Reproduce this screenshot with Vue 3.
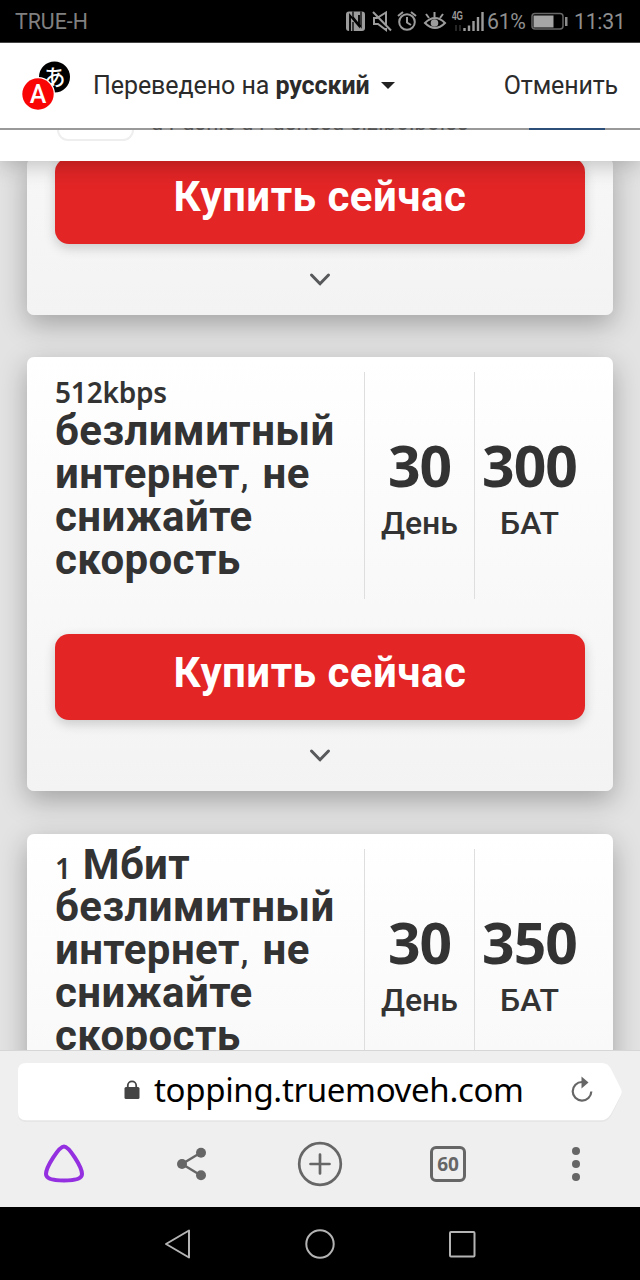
<script setup>
import { ref } from 'vue'

const plans = ref([
  { id: 1 },
  {
    id: 2,
    prefix: '512kbps',
    lines: [['безлимитный'], ['интернет', ' не'], ['снижайте'], ['скорость']],
    days: 30,
    price: 300
  },
  {
    id: 3,
    prefix: '1',
    unit: 'Мбит',
    lines: [['безлимитный'], ['интернет', ' не'], ['снижайте'], ['скорость']],
    days: 30,
    price: 350
  }
])
</script>

<template>
  <div class="phone">
    <header class="status-bar">
      <span class="carrier">TRUE-H</span>
      <svg class="status-icons" width="140" height="24" viewBox="345 9 140 24" fill="none" stroke="#9c9c9c" stroke-width="2">
        <!-- nfc -->
        <rect x="346" y="11.500" width="19" height="19.500" rx="3" fill="#9c9c9c" stroke="none" />
        <path d="M350 31V15.500L359 26V15" stroke="#000" stroke-width="1.800" />
        <path d="M353 11.500V17L361 27V11.500M353 31V22" stroke="#000" stroke-width="1.300" />
        <!-- sound off -->
        <path d="M373 18H377L386 12.500V26M374 18V24H378L386 30V28M373 12L391 30.500" />
        <!-- alarm -->
        <circle cx="407" cy="22" r="7.800" />
        <path d="M407 17V22.500L411 25M398 16L403 12M411 12L416 16" />
        <!-- eye -->
        <path d="M425 23Q435 13 445 23Q435 33 425 23Z" />
        <circle cx="434.500" cy="23" r="3.800" fill="#9c9c9c" stroke="none" />
        <path d="M434.500 12V17M426 14L429 18M443 14L440 18" />
        <!-- signal -->
        <path d="M464.500 28V31M469 25.500V31M473.500 21V31M478 17V31M482.500 12V31" stroke-width="2.400" />
        <path d="M456 25V31M460 25V31" stroke="#333" stroke-width="1.500" />
        <text x="452" y="20" class="net" textLength="11" lengthAdjust="spacingAndGlyphs">4G</text>
      </svg>
      <span class="percent">61%</span>
      <svg class="battery" width="37" height="20" viewBox="0 0 37 20">
        <rect x="1" y="2.500" width="31" height="15.500" rx="3" fill="none" stroke="#666" stroke-width="1.500" />
        <rect x="2.500" y="4.500" width="20" height="12" fill="#a6a6a6" />
        <rect x="34" y="6" width="2.500" height="9" fill="#8c8c8c" />
      </svg>
      <span class="clock">11:31</span>
    </header>

    <div class="translate-bar">
      <svg class="translate-logo" width="50" height="50" viewBox="0 0 50 50">
        <circle cx="32.500" cy="16" r="15.500" fill="#000" />
        <text x="32.500" y="23.500" class="kana">あ</text>
        <circle cx="16" cy="33" r="17" fill="#fff" />
        <circle cx="16" cy="33" r="15.700" fill="#f90505" />
        <text x="16" y="42" class="latin">A</text>
      </svg>
      <span class="translated">Переведено на <b>русский</b></span>
      <span class="caret"></span>
      <span class="cancel">Отменить</span>
    </div>

    <div class="app-banner">
      <div class="app-thumb"></div>
      <div class="app-name"><span>u r usnis u r usnssu siziboiboiss</span></div>
      <div class="app-open"></div>
    </div>

    <main class="page">
      <section v-for="plan in plans" :key="plan.id" class="card">
        <div v-if="plan.prefix" class="info">
          <h2 class="title">
            <span class="first" :class="{ short: !plan.unit }"><span class="prefix">{{ plan.prefix }}</span><span v-if="plan.unit" class="unit">{{ plan.unit }}</span></span>
            <span v-for="line in plan.lines" :key="line[0]" class="line">{{ line[0] }}<template v-if="line[1]"><span class="comma">,</span>{{ line[1] }}</template></span>
          </h2>
          <div class="cell">
            <strong>{{ plan.days }}</strong>
            <span>День</span>
          </div>
          <div class="cell">
            <strong>{{ plan.price }}</strong>
            <span>БАТ</span>
          </div>
        </div>
        <button class="buy">Купить сейчас</button>
        <div class="expand">
          <svg width="24" height="16" viewBox="0 0 24 16" fill="none" stroke="#58595b" stroke-width="3" stroke-linecap="round" stroke-linejoin="round">
            <path d="M3.500 3L12 11.800L20.500 3" />
          </svg>
        </div>
      </section>
    </main>

    <footer class="browser">
      <div class="address">
        <svg class="address-bg" width="605" height="59" viewBox="0 0 605 59">
          <path d="M8 1.500H584Q590 1.500 593 7L603 27Q604.500 30 603 33L593 53Q589 59 583 59H8Q0 59 0 51V9Q0 1.500 8 1.500Z" fill="#e6e6e6" />
          <path d="M8 0H584Q590 0 593 6L603 26Q604.500 29 603 32L593 51Q589 57.300 583 57.300H8Q0 57.300 0 49.300V8Q0 0 8 0Z" fill="#fff" />
        </svg>
        <svg class="lock" width="16" height="20" viewBox="0 0 16 20">
          <rect x="0.500" y="7" width="15" height="12" rx="1.500" fill="#444" />
          <path d="M3.800 8V5.500A4.200 4.200 0 0 1 12.200 5.500V8" fill="none" stroke="#444" stroke-width="1.800" />
        </svg>
        <span class="url">topping.truemoveh.com</span>
        <svg class="reload" width="24" height="28" viewBox="0 0 24 28">
          <path d="M12 6A9.300 9.300 0 1 0 21.300 15.500" fill="none" stroke="#666" stroke-width="2.200" />
          <path d="M11.500 0.500L18.500 6.500L11.500 12.500Z" fill="#666" />
        </svg>
      </div>
      <nav class="toolbar">
        <svg width="44" height="44" viewBox="0 0 44 44">
          <path d="M22 4.500C27 4.500 40 25 40 32C40 37 33 38.500 22 38.500S4 37 4 32C4 25 17 4.500 22 4.500Z" fill="none" stroke="#9430e0" stroke-width="4" />
        </svg>
        <svg width="44" height="44" viewBox="4.500 0 44 44">
          <path d="M35.500 10.500L16.500 22L35.500 33.500" fill="none" stroke="#666" stroke-width="2.400" />
          <circle cx="35.500" cy="10.700" r="5" fill="#666" />
          <circle cx="16.500" cy="22" r="5" fill="#666" />
          <circle cx="35.500" cy="33.300" r="5" fill="#666" />
        </svg>
        <svg width="46" height="46" viewBox="0 0 46 46">
          <circle cx="23" cy="23" r="20.800" fill="none" stroke="#666" stroke-width="2.700" />
          <path d="M23 13.500V32.500M13.500 23H32.500" stroke="#666" stroke-width="2.700" stroke-linecap="round" />
        </svg>
        <div class="tabs">60</div>
        <div class="dots"><i></i><i></i><i></i></div>
      </nav>
    </footer>

    <div class="system-nav">
      <svg width="320" height="32" viewBox="160 0 320 32" fill="none" stroke="#b4b4b4" stroke-width="2" stroke-linejoin="round">
        <path d="M189 2.500V29.500L166 16Z" />
        <circle cx="320" cy="16" r="13.700" />
        <rect x="450" y="4" width="24.500" height="24.500" rx="1" />
      </svg>
    </div>
  </div>
</template>

<style>
body {
  margin: 0;
}
</style>

<style scoped>
.phone {
  width: 640px;
  height: 1280px;
  overflow: hidden;
  display: flex;
  flex-direction: column;
  background: #000;
  font-family: Roboto, "Noto Sans", sans-serif;
  color: #333;
}

.phone > * {
  box-sizing: border-box;
  flex-shrink: 0;
}

.status-bar {
  height: 43px;
  display: flex;
  align-items: center;
  padding-left: 15px;
  background: #000;
  border-bottom: 1px solid #444;
  color: #8f8f8f;
  font-size: 21.3px;
}

.carrier {
  width: 330px;
  color: #808080;
}

.net {
  font: 700 12px "Liberation Sans", sans-serif;
  fill: #9c9c9c;
  stroke: none;
}

.percent {
  width: 44px;
  padding-left: 2px;
  box-sizing: border-box;
  letter-spacing: -0.3px;
}

.battery {
  margin-left: 2px;
}

.clock {
  margin-left: 6px;
  letter-spacing: -0.3px;
}

.translate-bar {
  position: relative;
  z-index: 3;
  height: 85px;
  display: flex;
  align-items: center;
  padding: 0 22px;
  background: #fff;
  color: #2b2b2b;
  font-size: 25px;
}

.kana {
  font: 500 22px "Noto Sans CJK JP", sans-serif;
  fill: #fff;
  text-anchor: middle;
}

.latin {
  font: 500 25px Roboto, sans-serif;
  fill: #fff;
  text-anchor: middle;
}

.translated {
  margin-left: 21px;
  letter-spacing: -0.07px;
}

.caret {
  margin-left: 11px;
  border: 7px solid transparent;
  border-top-color: #222;
  border-bottom: 0;
}

.cancel {
  margin-left: auto;
  letter-spacing: -0.15px;
}

.app-banner {
  height: 33px;
  position: relative;
  z-index: 2;
  display: flex;
  background: #fff;
  border-top: 2px solid #999;
  box-shadow: 0 2px 24px rgba(0, 0, 0, 0.27);
}

.app-thumb {
  width: 77px;
  height: 11px;
  margin-left: 57px;
  box-sizing: border-box;
  border: 2px solid #eee;
  border-top: 0;
  border-radius: 0 0 18px 18px;
}

.app-name {
  width: 320px;
  height: 3px;
  margin: -2px 0 0 17px;
  overflow: hidden;
  display: flex;
  align-items: flex-end;
  white-space: nowrap;
  font-size: 22px;
  line-height: 26px;
  letter-spacing: 0.2px;
  color: #555;
}

.app-name span {
  margin-bottom: -5px;
}

.app-open {
  width: 76px;
  height: 2px;
  margin: -2px 0 0 58px;
  background: #2b4f78;
}

.page {
  height: 889px;
  overflow: hidden;
  display: flex;
  flex-direction: column;
  gap: 43px;
  padding: 0 27px;
  background: #e3e3e3;
}

.card {
  flex-shrink: 0;
  padding: 0 28px;
  border-radius: 7px;
  background: linear-gradient(#fff, #f3f3f3) bottom / 100% 434px;
  box-shadow: 0 9px 28px rgba(0, 0, 0, 0.29);
}

.card:first-child {
  margin: -3px 0 -1px;
}

.info {
  display: flex;
  height: 262px;
  padding-top: 15px;
}

.title {
  width: 309px;
  margin: 0;
  font-size: 42px;
  font-weight: 700;
  line-height: 43px;
  letter-spacing: 0.4px;
  white-space: nowrap;
}

.title .line {
  display: block;
}

.comma {
  display: inline-block;
  width: 12px;
  font-size: 34px;
  font-weight: 500;
  line-height: 1;
  text-indent: 1px;
}

.first {
  display: flex;
  align-items: baseline;
  height: 42px;
  margin-top: -6px;
}

.first.short {
  height: 37px;
  margin-top: 0;
}

.prefix {
  font: 600 28px/40px "Noto Sans", sans-serif;
  letter-spacing: -0.2px;
}

.unit {
  margin-left: 12px;
}

.cell {
  width: 110px;
  height: 227px;
  padding-top: 7px;
  box-sizing: border-box;
  flex-shrink: 0;
  border-left: 1px solid #dedede;
  display: flex;
  flex-direction: column;
  align-items: center;
  justify-content: center;
}

.cell strong {
  font: 700 57px/60px "Noto Sans", sans-serif;
  letter-spacing: -1px;
}

.cell span {
  font-size: 32px;
  font-weight: 500;
  line-height: 40px;
  margin-top: 8px;
}

.buy {
  display: block;
  width: 530px;
  height: 86px;
  padding: 0 0 10px;
  border: 0;
  border-radius: 14px;
  background: #e32526;
  box-shadow: 0 4px 12px rgba(0, 0, 0, 0.18);
  color: #fff;
  font: 700 42px Roboto, sans-serif;
  letter-spacing: 0.5px;
}

.expand {
  height: 71px;
  display: flex;
  justify-content: center;
  align-items: center;
}

.browser {
  height: 157px;
  position: relative;
  z-index: 2;
  padding: 12px 18px 0;
  background: #efefef;
  border-top: 1px solid #d6d6d6;
}

.address {
  position: relative;
  display: flex;
  align-items: center;
  width: 604px;
  height: 57px;
}

.address-bg {
  position: absolute;
  inset: 0;
}

.lock,
.url,
.reload {
  position: relative;
}

.lock {
  margin-left: 106px;
  margin-top: -4px;
}

.url {
  width: 400px;
  margin: -3px 0 0 14px;
  color: #000;
  font: 400 33px/40px "Noto Sans", sans-serif;
  letter-spacing: -0.33px;
  white-space: nowrap;
}

.reload {
  margin-left: 16px;
  margin-top: -4px;
}

.toolbar {
  height: 88px;
  margin: 0 -18px;
  display: grid;
  grid-template-columns: repeat(5, 128px);
  place-items: center;
}

.toolbar svg {
  display: block;
}

.tabs {
  width: 36px;
  height: 36px;
  box-sizing: border-box;
  border: 3px solid #666;
  border-radius: 6px;
  color: #666;
  font: 700 19px/30px "Noto Sans", sans-serif;
  text-align: center;
}

.dots {
  display: flex;
  flex-direction: column;
  gap: 5px;
}

.dots i {
  width: 8px;
  height: 8px;
  border-radius: 50%;
  background: #666;
}

.system-nav {
  height: 73px;
  display: flex;
  align-items: center;
  justify-content: center;
}
</style>
